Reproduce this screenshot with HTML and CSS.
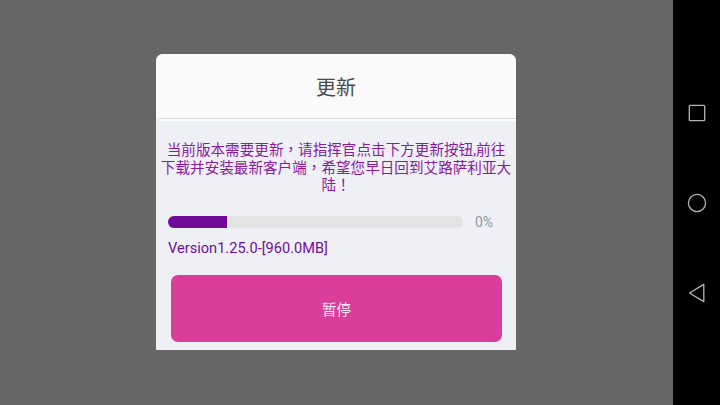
FILE: index.html
```html
<!DOCTYPE html>
<html>
<head>
<meta charset="utf-8">
<title>更新</title>
<link rel="stylesheet" href="styles.css">
</head>
<body>
<main class="screen">
  <section class="dialog">
    <header class="dialog-header"><h1 class="dialog-title">更新</h1></header>
    <div class="divider"></div>
    <div class="dialog-body">
      <p class="message">当前版本需要更新，请指挥官点击下方更新按钮,前往下载并安装最新客户端，希望您早日回到艾路萨利亚大陆！</p>
      <div class="progress-row">
        <div class="progress-track"><div class="progress-fill"></div></div>
        <span class="progress-label">0%</span>
      </div>
      <p class="version">Version1.25.0-[960.0MB]</p>
      <button class="action" type="button">暂停</button>
    </div>
  </section>
</main>
<nav class="navbar">
  <svg class="nav-icon" width="20" height="20" viewBox="0 0 20 20"><rect x="2.3" y="2.3" width="15.4" height="15.4" rx="1" fill="none" stroke="#b5b5b5" stroke-width="1.3"/></svg>
  <svg class="nav-icon" width="20" height="20" viewBox="0 0 20 20"><circle cx="10" cy="10" r="8.6" fill="none" stroke="#b5b5b5" stroke-width="1.3"/></svg>
  <svg class="nav-icon" width="20" height="20" viewBox="0 0 20 20"><path d="M16.8 1.4V18.6L2.5 10Z" fill="none" stroke="#b5b5b5" stroke-width="1.3" stroke-linejoin="round"/></svg>
</nav>
</body>
</html>
```
FILE: styles.css
```css
* { box-sizing: border-box; }
html, body { margin: 0; height: 100%; }
body {
  width: 720px;
  height: 405px;
  display: flex;
  overflow: hidden;
  background: #666666;
  font-family: Roboto, "Noto Sans CJK SC", sans-serif;
}
.screen {
  flex: 1;
  display: flex;
  justify-content: center;
  align-items: flex-start;
  padding: 54px 1px 0 0;
}
.dialog {
  width: 360px;
  height: 296px;
  display: flex;
  flex-direction: column;
  background: #eff0f6;
  border-radius: 7px 7px 0 0;
  overflow: hidden;
}
.dialog-header {
  height: 64px;
  display: flex;
  align-items: center;
  justify-content: center;
  background: #fafafa;
}
.dialog-title {
  margin: 0;
  font-size: 20px;
  font-weight: 400;
  color: #4a4a4a;
}
.divider {
  height: 3px;
  margin-left: 4px;
  border-top: 1px solid #d5d5d5;
  background: #ffffff;
  flex: none;
}
.dialog-body {
  flex: 1;
  display: flex;
  flex-direction: column;
  padding: 21px 0 8px;
}
.message {
  margin: 0;
  padding: 0 4px;
  text-align: center;
  font-family: Roboto, "Noto Sans CJK TC", sans-serif;
  font-size: 14.6px;
  line-height: 17.6px;
  color: #8b1a9f;
}
.progress-row {
  display: flex;
  align-items: center;
  margin-top: 19px;
  padding-left: 12px;
}
.progress-track {
  width: 295px;
  height: 12px;
  border-radius: 6px;
  background: #e2e3e3;
  overflow: hidden;
}
.progress-fill {
  width: 59px;
  height: 100%;
  background: #6f0a9a;
}
.progress-label {
  margin-left: 12px;
  font-size: 14px;
  color: #8a9aa3;
}
.version {
  margin: 9px 0 0 12px;
  font-size: 14.6px;
  line-height: 18px;
  color: #6f0f96;
}
.action {
  width: 331px;
  height: 67px;
  margin: 18px 0 0 15px;
  border: none;
  border-radius: 7px;
  background: #da3d9a;
  color: #fbe6f2;
  font: inherit;
  font-size: 14.6px;
}
.navbar {
  width: 47px;
  flex: none;
  display: flex;
  flex-direction: column;
  align-items: center;
  padding-top: 102.5px;
  gap: 70px;
  background: #000000;
}
.nav-icon { display: block; flex: none; }
```
